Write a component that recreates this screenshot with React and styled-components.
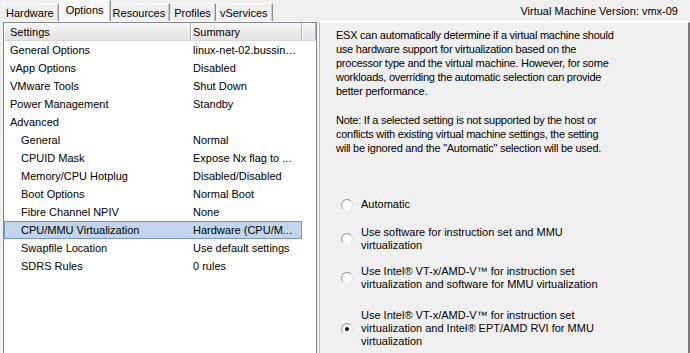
import React from "react";
import styled, { createGlobalStyle } from "styled-components";

const Global = createGlobalStyle`
  html, body { margin: 0; padding: 0; background: #f0f0f0; }
  body { font-family: "Liberation Sans", Arial, sans-serif; font-size: 11px; color: #000; }
`;

const Window = styled.div`
  width: 690px;
  height: 353px;
  overflow: hidden;
  display: flex;
  flex-direction: column;
  background: #f0f0f0;
`;

const TabBar = styled.div`
  height: 22px;
  flex: none;
  display: flex;
  align-items: flex-end;
  padding-left: 3px;
  box-sizing: border-box;
  border-bottom: 1px solid #ffffff;
`;

const Tab = styled.div`
  box-sizing: border-box;
  height: ${(p) => (p.$active ? 21 : 18)}px;
  padding: 0 ${(p) => (p.$active ? 6 : 4)}px 0 ${(p) => (p.$active ? 6 : 2)}px;
  margin: 0 ${(p) => (p.$active ? -1 : 1)}px 0 ${(p) => (p.$active ? -1 : 0)}px;
  position: relative;
  z-index: ${(p) => (p.$active ? 1 : 0)};
  display: flex;
  align-items: ${(p) => (p.$active ? "flex-start" : "center")};
  padding-top: ${(p) => (p.$active ? 3 : 1)}px;
  background: ${(p) => (p.$active ? "#f7f7f7" : "#f0f0f0")};
  border-top: 1px solid #ffffff;
  border-left: 1px solid #ffffff;
  border-right: 1px solid #8e8e8e;
  box-shadow: inset -1px 0 0 #c8c8c8;
  white-space: nowrap;
`;

const VersionLabel = styled.div`
  margin-left: auto;
  align-self: center;
  padding-right: 12px;
  white-space: nowrap;
`;

const Body = styled.div`
  flex: 1;
  display: flex;
  min-height: 0;
  padding-left: 3px;
  gap: 2px;
`;

const ListPane = styled.div`
  width: 314px;
  box-sizing: border-box;
  background: #ffffff;
  border: 1px solid #828790;
  border-bottom: none;
  display: flex;
  flex-direction: column;
`;

const HeaderRow = styled.div`
  display: grid;
  grid-template-columns: 187px 111px 1fr;
  height: 18px;
  box-sizing: border-box;
  border-bottom: 1px solid #d5d5d5;
  background: linear-gradient(#fbfbfb, #ececec 45%, #e2e2e2);
`;

const HeaderCell = styled.div`
  display: flex;
  align-items: center;
  padding-left: ${(p) => p.$pad}px;
  border-right: 1px solid #b3b3b3;
  box-shadow: inset 1px 0 0 #ffffff;
  white-space: nowrap;
`;

const Row = styled.div`
  display: grid;
  grid-template-columns: 187px 111px;
  height: 18px;
  box-sizing: border-box;
  align-items: center;
  width: 298px;
  background: ${(p) => (p.$selected ? "#c3d5ec" : "transparent")};
  outline: ${(p) => (p.$selected ? "1px solid #6f98c8" : "none")};
  outline-offset: -1px;
`;

const NameCell = styled.div`
  padding-left: ${(p) => (p.$level ? 17 : 6)}px;
  white-space: nowrap;
  overflow: hidden;
`;

const ValueCell = styled.div`
  padding-left: 2px;
  white-space: nowrap;
  overflow: hidden;
`;

const Panel = styled.div`
  flex: 1;
  box-sizing: border-box;
  border-left: 1px solid #b9b9b9;
  border-top: 1px solid #ffffff;
  border-right: 2px solid #7c7c7c;
  background: #f0f0f0;
  padding: 5px 0 0 16px;
  display: flex;
  flex-direction: column;
`;

const Paragraph = styled.p`
  margin: ${(p) => p.$top}px 0 0 0;
  line-height: 14px;
  letter-spacing: -0.25px;
  white-space: nowrap;
`;

const RadioList = styled.div`
  display: flex;
  flex-direction: column;
  padding-left: 5px;
  margin-top: 43px;
`;

const RadioItem = styled.label`
  display: flex;
  align-items: center;
  gap: 8px;
  margin-top: ${(p) => p.$top}px;
`;

const RadioCircle = styled.span`
  flex: none;
  width: 12px;
  height: 12px;
  box-sizing: border-box;
  border-radius: 50%;
  border: 1px solid;
  border-color: #8d8d8d #dcdcdc #f4f4f4 #9d9d9d;
  background: radial-gradient(circle at 50% 50%, #ffffff 55%, #e9e9e9 100%);
  display: flex;
  align-items: center;
  justify-content: center;
  &::after {
    content: "";
    width: 4px;
    height: 4px;
    border-radius: 50%;
    background: ${(p) => (p.$checked ? "#111" : "transparent")};
  }
`;

const RadioText = styled.span`
  line-height: 13px;
  white-space: nowrap;
`;

const tabs = ["Hardware", "Options", "Resources", "Profiles", "vServices"];

const rows = [
  ["General Options", "linux-net-02.bussin\u2026", 0],
  ["vApp Options", "Disabled", 0],
  ["VMware Tools", "Shut Down", 0],
  ["Power Management", "Standby", 0],
  ["Advanced", "", 0],
  ["General", "Normal", 1],
  ["CPUID Mask", "Expose Nx flag to ...", 1],
  ["Memory/CPU Hotplug", "Disabled/Disabled", 1],
  ["Boot Options", "Normal Boot", 1],
  ["Fibre Channel NPIV", "None", 1],
  ["CPU/MMU Virtualization", "Hardware (CPU/M...", 1, true],
  ["Swapfile Location", "Use default settings", 1],
  ["SDRS Rules", "0 rules", 1],
];

const radios = [
  { top: 0, lines: ["Automatic"] },
  { top: 15, lines: ["Use software for instruction set and MMU", "virtualization"] },
  {
    top: 13,
    lines: [
      "Use Intel\u00ae VT-x/AMD-V\u2122 for instruction set",
      "virtualization and software for MMU virtualization",
    ],
  },
  {
    top: 18,
    checked: true,
    lines: [
      "Use Intel\u00ae VT-x/AMD-V\u2122 for instruction set",
      "virtualization and Intel\u00ae EPT/AMD RVI for MMU",
      "virtualization",
    ],
  },
];

const withBreaks = (lines) =>
  lines.map((l, i) => (
    <React.Fragment key={i}>
      {i > 0 && <br />}
      {l}
    </React.Fragment>
  ));

export default function App() {
  return (
    <>
      <Global />
      <Window>
        <TabBar>
          {tabs.map((t) => (
            <Tab key={t} $active={t === "Options"}>
              {t}
            </Tab>
          ))}
          <VersionLabel>Virtual Machine Version: vmx-09</VersionLabel>
        </TabBar>
        <Body>
          <ListPane>
            <HeaderRow>
              <HeaderCell $pad={6}>Settings</HeaderCell>
              <HeaderCell $pad={2}>Summary</HeaderCell>
              <HeaderCell $pad={0} />
            </HeaderRow>
            {rows.map(([name, value, level, sel]) => (
              <Row key={name} $selected={sel}>
                <NameCell $level={level}>{name}</NameCell>
                <ValueCell>{value}</ValueCell>
              </Row>
            ))}
          </ListPane>
          <Panel>
            <Paragraph $top={0}>
              {withBreaks([
                "ESX can automatically determine if a virtual machine should",
                "use hardware support for virtualization based on the",
                "processor type and the virtual machine. However, for some",
                "workloads, overriding the automatic selection can provide",
                "better performance.",
              ])}
            </Paragraph>
            <Paragraph $top={15}>
              {withBreaks([
                "Note: If a selected setting is not supported by the host or",
                "conflicts with existing virtual machine settings, the setting",
                "will be ignored and the \"Automatic\" selection will be used.",
              ])}
            </Paragraph>
            <RadioList>
              {radios.map((r, i) => (
                <RadioItem key={i} $top={r.top}>
                  <RadioCircle $checked={r.checked} />
                  <RadioText>{withBreaks(r.lines)}</RadioText>
                </RadioItem>
              ))}
            </RadioList>
          </Panel>
        </Body>
      </Window>
    </>
  );
}
